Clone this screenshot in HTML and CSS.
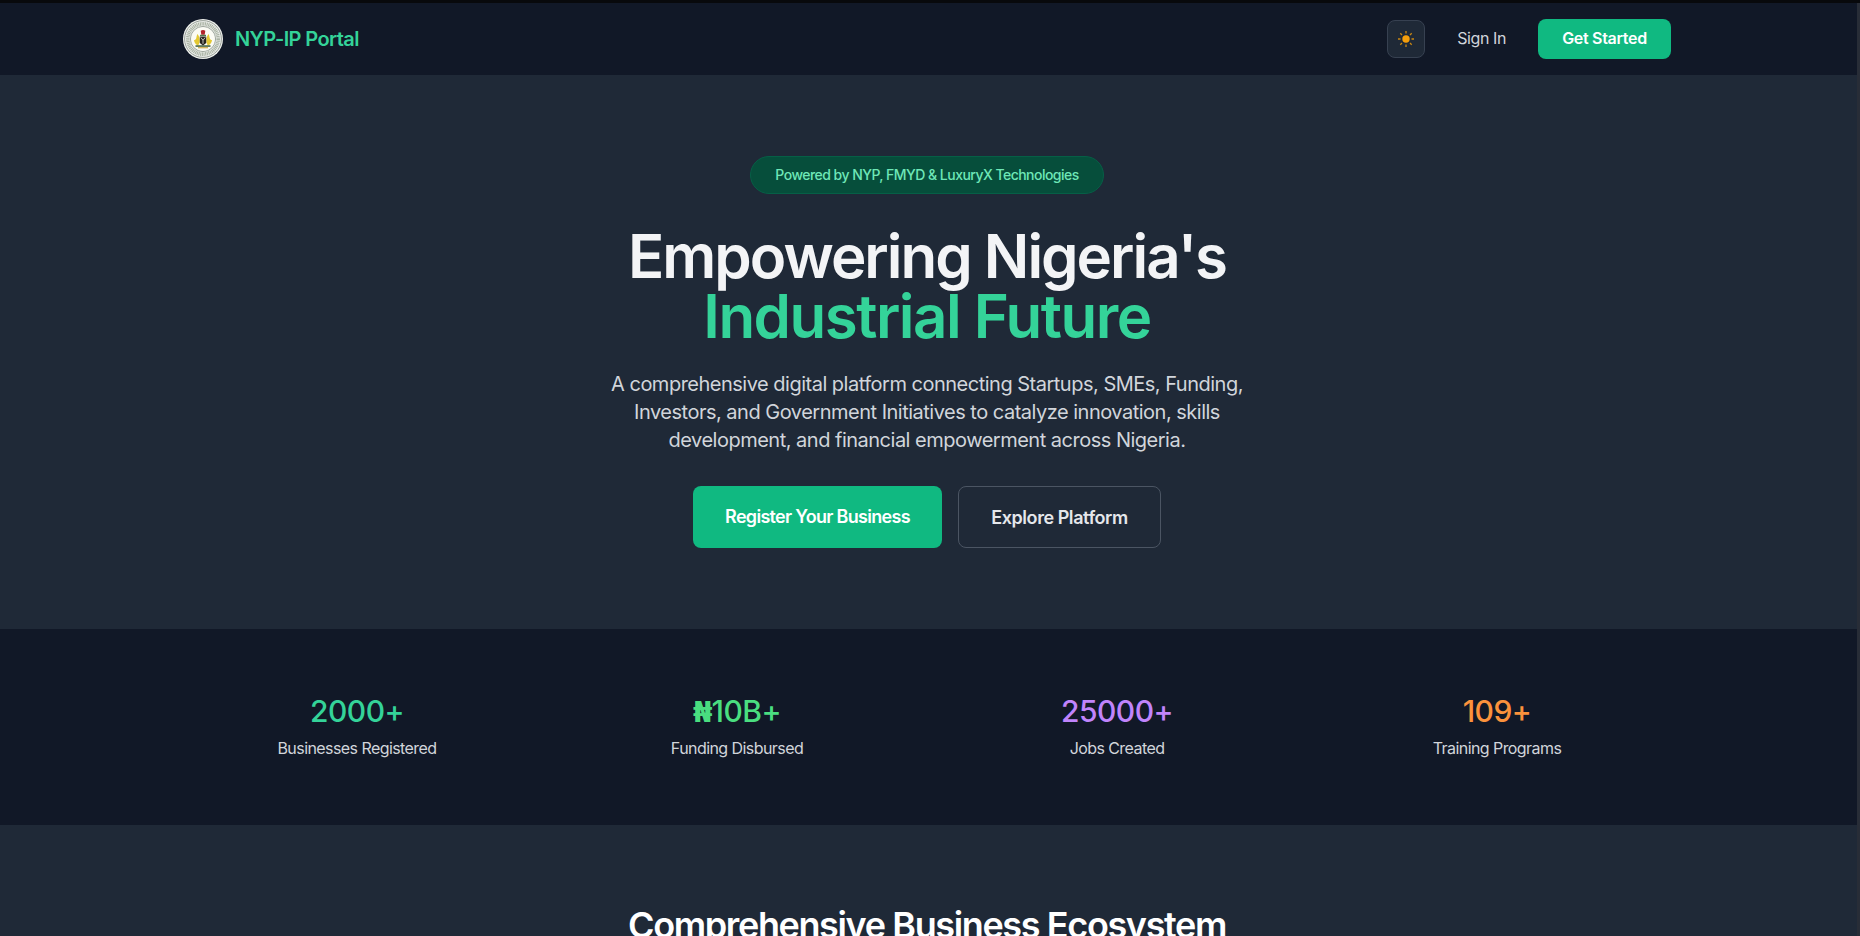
FILE: index.html
```html
<!DOCTYPE html>
<html lang="en">
  <head>
    <meta charset="UTF-8" />
    <title>NYP-IP Portal</title>
    <link rel="stylesheet" href="styles.css">
  </head>
  <body>
    <div class="top-strip"></div>
    <div class="window">
      <div class="page">
        <header class="navbar">
          <div class="navbar-inner">
            <a class="brand" href="#">
              <svg class="brand-logo" viewBox="0 0 40 40">
                <circle cx="20" cy="20" r="20" fill="#eef0ec" />
                <circle cx="20" cy="20" r="18.4" fill="none" stroke="#8f968e" stroke-width="0.9" />
                <circle cx="20" cy="20" r="15.2" fill="none" stroke="#aab3a4" stroke-width="3.6" stroke-dasharray="1.1 0.6" />
                <circle cx="20" cy="20" r="12.6" fill="none" stroke="#7f8a7c" stroke-width="0.7" />
                <circle cx="20" cy="20" r="11.6" fill="#fbfbf4" />
                <path d="M14.5 15c1.5 2 2.2 4 2.2 6.5 0 2-.6 3.8-1.7 5-2-.6-3.8-2.8-4-5.5 1.2 0 2-.6 2.3-2 .3-1.5.6-3 1.2-4zM25.5 15c-1.5 2-2.2 4-2.2 6.5 0 2 .6 3.8 1.7 5 2-.6 3.8-2.8 4-5.500-1.2 0-2-.6-2.3-2-.3-1.500-.6-3-1.200-4z" fill="#e3c832" />
                <path d="M16.8 17.5h6.4V24L20 26.5 16.8 24z" fill="#26251f" />
                <path d="M17.8 18.5l2.2 2.8 2.200-2.800M20 21.300v3.500" fill="none" stroke="#e8e6df" stroke-width="0.8" />
                <path d="M17.700 11.800c1.500-1.200 3.100-1.200 4.600 0l-.6 3.900h-3.400z" fill="#b3232a" />
                <path d="M17 15.800h6v1.100h-6z" fill="#3d6b3a" />
                <path d="M12.500 26.300h15v1.500h-15z" fill="#3a5a36" />
                <path d="M15 28.200h10v1.100H15z" fill="#c9a233" />
              </svg>
              <span class="brand-name">NYP-IP Portal</span>
            </a>
            <div class="nav-actions">
              <button class="theme-toggle" aria-label="Toggle theme">
                <svg viewBox="0 0 16 16" width="16" height="16">
                  <circle cx="8" cy="8" r="3.7" fill="#f59e0b" />
                  <path d="M8 0v2.500M8 13.500V16M0 8h2.500M13.500 8H16M2.300 2.300L4 4M12 12l1.700 1.700M2.300 13.700L4 12M12 4l1.700-1.700" stroke="#c98712" stroke-width="1.3" />
                </svg>
              </button>
              <a class="sign-in" href="#">Sign In</a>
              <a class="get-started" href="#">Get Started</a>
            </div>
          </div>
        </header>

        <section class="hero">
          <div class="badge">Powered by NYP, FMYD &amp; LuxuryX Technologies</div>
          <h1 class="hero-title">Empowering Nigeria's <span class="hero-accent">Industrial Future</span></h1>
          <p class="hero-text">A comprehensive digital platform connecting Startups, SMEs, Funding, Investors, and Government Initiatives to catalyze innovation, skills development, and financial empowerment across Nigeria.</p>
          <div class="hero-buttons">
            <a class="button button-primary" href="#">Register Your Business</a>
            <a class="button button-outline" href="#">Explore Platform</a>
          </div>
        </section>

        <section class="stats">
          <div class="stats-grid">
            <div class="stat">
              <div class="stat-value stat-teal">2000+</div>
              <div class="stat-label">Businesses Registered</div>
            </div>
            <div class="stat">
              <div class="stat-value stat-green"><span class="naira">₦</span>10B+</div>
              <div class="stat-label">Funding Disbursed</div>
            </div>
            <div class="stat">
              <div class="stat-value stat-purple">25000+</div>
              <div class="stat-label">Jobs Created</div>
            </div>
            <div class="stat">
              <div class="stat-value stat-orange">109+</div>
              <div class="stat-label">Training Programs</div>
            </div>
          </div>
        </section>

        <section class="features">
          <h2 class="features-title">Comprehensive Business Ecosystem</h2>
        </section>
      </div>
      <div class="scrollbar"></div>
    </div>
  </body>
</html>
```

FILE: styles.css
```css
html, body {
  height: 100%;
}
body {
  margin: 0;
  padding: 0;
  display: flex;
  flex-direction: column;
  overflow: hidden;
  font-family: 'Inter', 'Noto Sans', sans-serif;
  background-color: #1f2937;
  color: white;
}
a {
  text-decoration: none;
}
.top-strip {
  height: 3px;
  flex-shrink: 0;
  background-color: #08090c;
}
.window {
  flex: 1;
  display: flex;
  min-height: 0;
}
.page {
  flex: 1;
  min-width: 0;
  overflow: hidden;
}
.scrollbar {
  width: 3px;
  background-color: #282d37;
}
.navbar {
  height: 72px;
  padding-right: 3px;
  background-color: #111827;
}
.navbar-inner {
  height: 100%;
  width: 1488px;
  margin: 0 auto;
  display: flex;
  align-items: center;
  justify-content: space-between;
}
.brand {
  display: flex;
  align-items: center;
  gap: 12px;
}
.brand-logo {
  width: 40px;
  height: 40px;
}
.brand-name {
  font-size: 20px;
  font-weight: 600;
  color: #34d399;
  letter-spacing: -0.6px;
}
.nav-actions {
  display: flex;
  align-items: center;
}
.theme-toggle {
  width: 38px;
  height: 38px;
  padding: 0;
  display: flex;
  align-items: center;
  justify-content: center;
  background-color: #1f2937;
  border: 1px solid #374151;
  border-radius: 8px;
}
.sign-in {
  margin-left: 32px;
  padding-bottom: 2px;
  font-size: 16px;
  font-weight: 400;
  color: #d1d5db;
  letter-spacing: -0.4px;
}
.get-started {
  margin-left: 32px;
  width: 133px;
  height: 40px;
  box-sizing: border-box;
  padding-bottom: 2px;
  display: flex;
  align-items: center;
  justify-content: center;
  background-color: #10b981;
  border-radius: 8px;
  font-size: 16px;
  font-weight: 600;
  color: white;
  letter-spacing: -0.3px;
}
.hero {
  height: 554px;
  box-sizing: border-box;
  padding: 81px 3px 0 0;
  display: flex;
  flex-direction: column;
  align-items: center;
  text-align: center;
  background-color: #1f2937;
}
.badge {
  width: 354px;
  height: 38px;
  box-sizing: border-box;
  padding-bottom: 2px;
  display: flex;
  align-items: center;
  justify-content: center;
  background-color: #064e3b;
  border: 1px solid #065f46;
  border-radius: 19px;
  font-size: 14px;
  font-weight: 500;
  color: #6ee7b7;
  letter-spacing: -0.53px;
}
.hero-title {
  width: 800px;
  margin: 32px 0 0;
  font-size: 60px;
  line-height: 60px;
  font-weight: 600;
  color: #f3f4f6;
  letter-spacing: -2px;
}
.hero-accent {
  display: block;
  color: #34d399;
  letter-spacing: -1.5px;
}
.hero-text {
  width: 672px;
  margin: 24px 0 0;
  font-size: 20px;
  line-height: 28px;
  color: #d1d5db;
  letter-spacing: -0.5px;
}
.hero-buttons {
  margin-top: 32px;
  display: flex;
  gap: 16px;
}
.button {
  height: 62px;
  box-sizing: border-box;
  display: flex;
  align-items: center;
  justify-content: center;
  border-radius: 8px;
  font-size: 18px;
  font-weight: 600;
}
.button-primary {
  width: 249px;
  padding-bottom: 2px;
  background-color: #10b981;
  color: white;
  letter-spacing: -0.7px;
}
.button-outline {
  width: 203px;
  border: 1px solid #4b5563;
  color: #e5e7eb;
  letter-spacing: -0.45px;
}
.stats {
  height: 196px;
  box-sizing: border-box;
  padding: 64px 3px 0 0;
  background-color: #111827;
}
.stats-grid {
  width: 1488px;
  margin: 0 auto;
  display: grid;
  grid-template-columns: repeat(4, 1fr);
  gap: 32px;
  text-align: center;
}
.stat-value {
  height: 36px;
  font-size: 30px;
  line-height: 36px;
  font-weight: 500;
  letter-spacing: -0.5px;
}
.naira {
  font-family: 'DejaVu Sans', sans-serif;
  font-weight: 700;
  font-size: 28px;
  line-height: 0;
  letter-spacing: -1px;
}
.stat-teal { color: #34d399; }
.stat-green { color: #4ade80; }
.stat-purple { color: #c084fc; }
.stat-orange { color: #fb923c; }
.stat-label {
  margin-top: 7px;
  font-size: 16px;
  line-height: 24px;
  color: #d1d5db;
  letter-spacing: -0.57px;
}
.features {
  padding: 80px 3px 0 0;
  text-align: center;
  background-color: #1f2937;
}
.features-title {
  margin: 0;
  font-size: 36px;
  line-height: 40px;
  font-weight: 600;
  color: white;
  letter-spacing: -1.37px;
}
```
